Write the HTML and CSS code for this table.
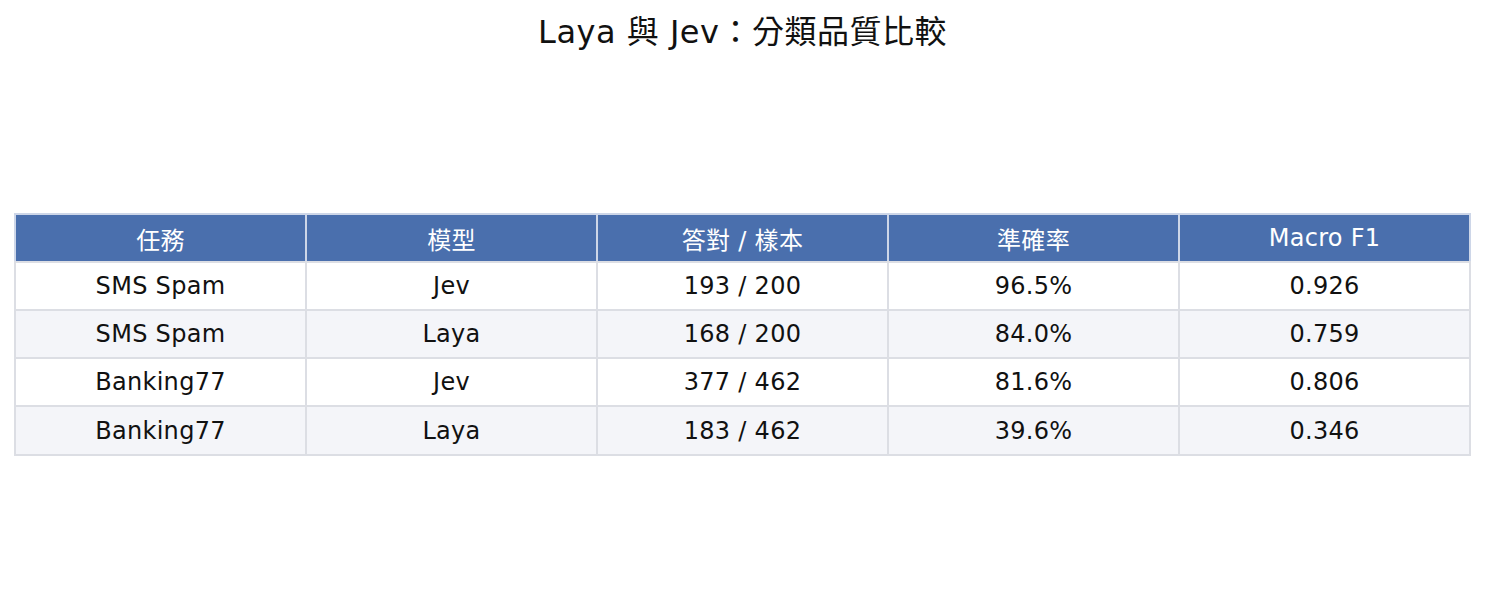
FILE: index.html
```html
<!DOCTYPE html>
<html lang="zh-Hant">
<head>
<meta charset="utf-8">
<title>Laya 與 Jev：分類品質比較</title>
<link rel="stylesheet" href="styles.css">
</head>
<body>
<main class="page">
  <h1 class="title">Laya 與 Jev：分類品質比較</h1>
  <table class="compare">
    <thead>
      <tr><th>任務</th><th>模型</th><th>答對 / 樣本</th><th>準確率</th><th>Macro F1</th></tr>
    </thead>
    <tbody>
      <tr><td>SMS Spam</td><td>Jev</td><td>193 / 200</td><td>96.5%</td><td>0.926</td></tr>
      <tr><td>SMS Spam</td><td>Laya</td><td>168 / 200</td><td>84.0%</td><td>0.759</td></tr>
      <tr><td>Banking77</td><td>Jev</td><td>377 / 462</td><td>81.6%</td><td>0.806</td></tr>
      <tr class="last"><td>Banking77</td><td>Laya</td><td>183 / 462</td><td>39.6%</td><td>0.346</td></tr>
    </tbody>
  </table>
</main>
</body>
</html>
```
FILE: styles.css
```css
html, body {
  margin: 0;
  padding: 0;
  background: #ffffff;
}
body {
  font-family: "DejaVu Sans", "Noto Sans CJK TC", sans-serif;
  color: #111111;
}
.page {
  padding: 12px 14px 0;
}
.title {
  margin: 0;
  text-align: center;
  font-weight: normal;
  font-size: 32px;
  line-height: 40px;
  letter-spacing: 0.5px;
  color: #111111;
}
.compare {
  margin-top: 161px;
  width: 100%;
  border-collapse: collapse;
  table-layout: fixed;
  font-size: 24px;
  letter-spacing: 0.3px;
}
.compare th,
.compare td {
  border: 2px solid #dcdee4;
  text-align: center;
  padding: 0;
  height: 46px;
}
.compare tr.last td {
  height: 47px;
}
.compare th {
  background: #4a6fad;
  color: #ffffff;
  font-weight: normal;
  border-color: #cdd6e8 #cdd6e8 #dcdee4;
}
.compare tbody tr:nth-child(even) td {
  background: #f4f5f9;
}
```
